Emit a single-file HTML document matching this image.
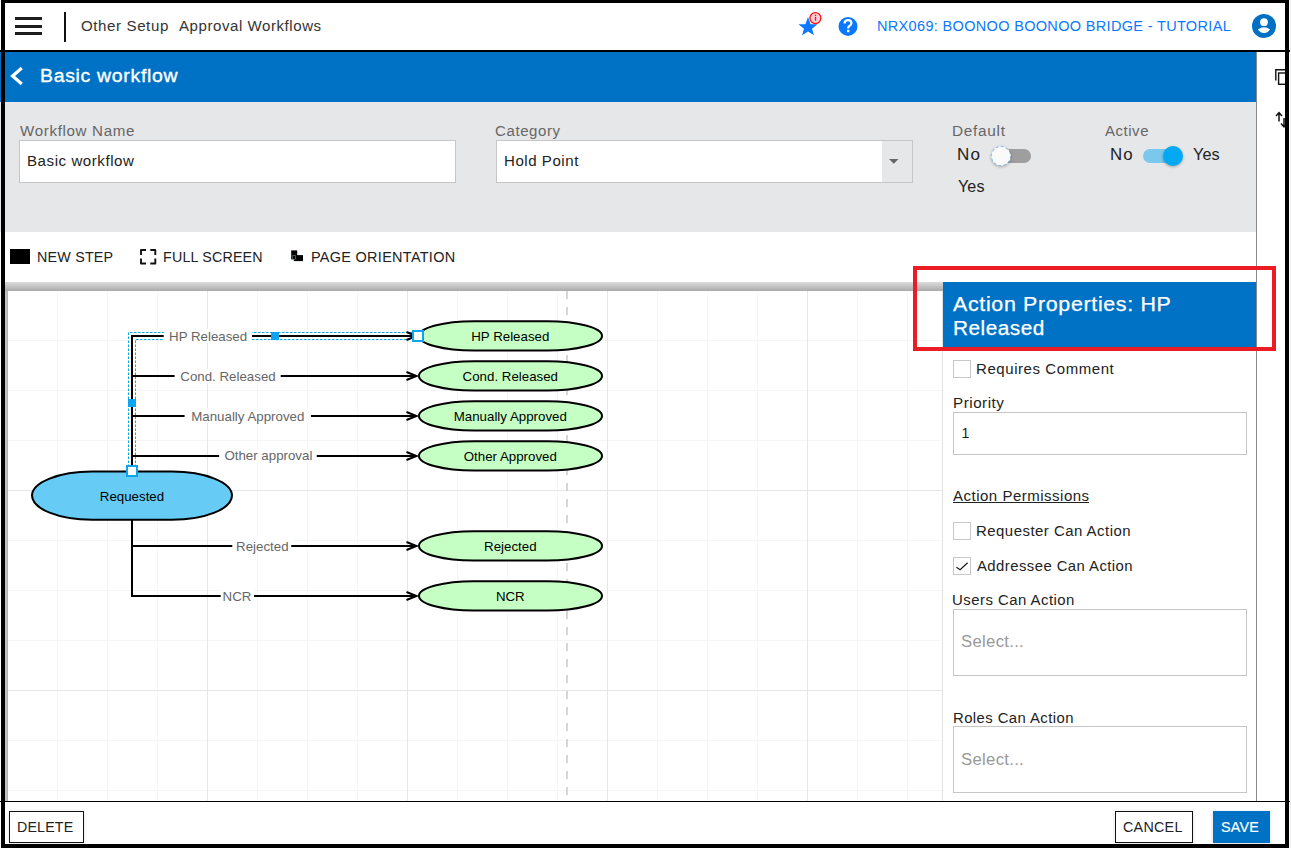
<!DOCTYPE html>
<html><head><meta charset="utf-8">
<style>
*{box-sizing:border-box;margin:0;padding:0}
html,body{width:1291px;height:848px;overflow:hidden;background:#fff;font-family:"Liberation Sans",sans-serif}
.a{position:absolute}
.tx{position:absolute;white-space:nowrap;font-family:"Liberation Sans",sans-serif}
.box{position:absolute;background:#fff;border:1px solid #c6c6c6}
.cb{position:absolute;width:18px;height:18px;background:#fff;border:1px solid #c8c8c8}
</style></head><body>
<!-- header -->
<div class="a" style="left:0;top:0;width:1291px;height:50px;background:#fff"></div>
<div class="a" style="left:15px;top:17px;width:27px;height:3px;background:#1e1e1e"></div>
<div class="a" style="left:15px;top:24.5px;width:27px;height:3px;background:#1e1e1e"></div>
<div class="a" style="left:15px;top:32px;width:27px;height:3px;background:#1e1e1e"></div>
<div class="a" style="left:64px;top:12px;width:2px;height:30px;background:#111"></div>
<svg class="a" style="left:790px;top:5px" width="40" height="40" viewBox="0 0 40 40">
  <polygon fill="#0a78ff" points="18,12 20.6,19.2 27.5,19.3 22,23.8 24,30.3 18,26.4 12,30.3 14,23.8 8.5,19.3 15.4,19.2"/>
  <circle cx="25.4" cy="13.1" r="5.5" fill="#ffd0d4" stroke="#ff1010" stroke-width="1.3"/>
  <rect x="24.8" y="11.8" width="1.4" height="4" fill="#f0106a"/>
  <rect x="24.8" y="9.7" width="1.4" height="1.3" fill="#f0106a"/>
</svg>
<svg class="a" style="left:830px;top:8px" width="36" height="36" viewBox="0 0 36 36">
  <circle cx="18" cy="18.4" r="9.5" fill="#0a78ff"/>
  <path d="M14.6 15.6 Q14.6 12.2 18 12.2 Q21.4 12.2 21.4 15.2 Q21.4 17 19.4 18 Q18.2 18.7 18.2 20.4" fill="none" stroke="#fff" stroke-width="2.2"/>
  <rect x="17" y="21.8" width="2.4" height="2.4" fill="#fff"/>
</svg>
<svg class="a" style="left:1250px;top:12px" width="28" height="28" viewBox="0 0 28 28">
  <circle cx="14" cy="14" r="12" fill="#0070c4"/>
  <circle cx="14" cy="10.2" r="3.9" fill="#fff"/>
  <path d="M7.9 17.6 Q14 12.8 20.1 17.6 Q17.6 21.1 14 21.1 Q10.4 21.1 7.9 17.6 Z" fill="#fff"/>
</svg>
<div class="a" style="left:0;top:50px;width:1290px;height:2px;background:#000"></div>
<!-- title bar -->
<div class="a" style="left:0;top:52px;width:1256px;height:50px;background:#0072c6"></div>
<svg class="a" style="left:5px;top:62px" width="24" height="28" viewBox="0 0 24 28">
  <polyline points="16.8,6 7.6,14 16.8,22" fill="none" stroke="#fff" stroke-width="3.2" stroke-linecap="butt"/>
</svg>
<!-- right strip -->
<div class="a" style="left:1256px;top:52px;width:1px;height:749px;background:#8a8a8a"></div>
<svg class="a" style="left:1260px;top:60px" width="28" height="80" viewBox="0 0 28 80">
  <path d="M15.8 20.5 V9.8 H26" fill="none" stroke="#111" stroke-width="1.4"/>
  <rect x="18.6" y="13" width="9" height="11.3" fill="none" stroke="#111" stroke-width="1.4"/>
  <path d="M19 61.5 V53 M16 56 L19 52.6 L22 56" fill="none" stroke="#111" stroke-width="1.5"/>
  <path d="M24 58 V66.5 M21 63.5 L24 66.9 L27 63.5" fill="none" stroke="#111" stroke-width="1.5"/>
</svg>
<!-- form -->
<div class="a" style="left:0;top:102px;width:1256px;height:130px;background:#e6e7e9"></div>
<div class="box" style="left:19px;top:140px;width:437px;height:43px"></div>
<div class="box" style="left:496px;top:140px;width:417px;height:43px"></div>
<div class="a" style="left:882px;top:141px;width:30px;height:41px;background:#e6e7e9"></div>
<svg class="a" style="left:886px;top:156px" width="16" height="10" viewBox="0 0 16 10"><polygon points="3,3 12.5,3 7.75,7.8" fill="#666"/></svg>
<!-- default toggle -->
<div class="a" style="left:992px;top:149px;width:39px;height:14px;border-radius:7px;background:#9e9e9e"></div>
<div class="a" style="left:991px;top:145.8px;width:20px;height:20px;border-radius:50%;background:#fafafa;border:1px dashed #8fbcf2;box-shadow:0 1px 3px rgba(0,0,0,0.3)"></div>
<!-- active toggle -->
<div class="a" style="left:1143px;top:149px;width:36px;height:14px;border-radius:7px;background:#7ac8ee"></div>
<div class="a" style="left:1163px;top:145.8px;width:20px;height:20px;border-radius:50%;background:#03a9f4;box-shadow:0 1px 3px rgba(0,0,0,0.3)"></div>
<!-- toolbar -->
<div class="a" style="left:10px;top:249px;width:20px;height:15px;background:#000"></div>
<svg class="a" style="left:136px;top:245px" width="24" height="24" viewBox="0 0 24 24">
  <path d="M5 10 V5 H10 M14.3 5 H19.3 V10 M19.3 13.6 V18.5 H14.3 M10 18.5 H5 V13.6" fill="none" stroke="#111" stroke-width="1.9" stroke-linejoin="round"/>
</svg>
<svg class="a" style="left:286px;top:245px" width="22" height="22" viewBox="0 0 22 22">
  <rect x="5.2" y="5.4" width="6" height="9" fill="#000"/>
  <rect x="7.8" y="10.1" width="9.2" height="6" fill="#000"/>
  <rect x="6.8" y="10.6" width="2.6" height="4" fill="none" stroke="#8aa" stroke-width="0.5"/>
</svg>
<!-- canvas -->
<div class="a" style="left:5px;top:282px;width:938px;height:9px;background:linear-gradient(#dcdcdc,#a9a9a9)"></div>
<div class="a" style="left:5px;top:291px;width:3px;height:510px;background:linear-gradient(90deg,#c8c8c8,#b0b0b0)"></div>
<div class="a" style="left:942px;top:291px;width:1px;height:510px;background:#e2e2e2"></div>
<svg class="a" style="left:8px;top:291px" width="934" height="510" viewBox="8 291 934 510">
  <defs>
    <pattern id="gmin" x="7" y="290" width="50" height="50" patternUnits="userSpaceOnUse">
      <path d="M0.5 0 V50 M0 0.5 H50" stroke="#f6f6f6" stroke-width="1" fill="none"/>
    </pattern>
    <pattern id="gmaj" x="7" y="290" width="200" height="200" patternUnits="userSpaceOnUse">
      <path d="M0.5 0 V200 M0 0.5 H200" stroke="#e6e6e6" stroke-width="1" fill="none"/>
    </pattern>
  </defs>
  <rect x="8" y="291" width="934" height="510" fill="#fff"/>
  <rect x="8" y="291" width="934" height="510" fill="url(#gmin)"/>
  <rect x="8" y="291" width="934" height="510" fill="url(#gmaj)"/>
  <line x1="567" y1="291" x2="567" y2="801" stroke="#d6d6d6" stroke-width="2" stroke-dasharray="8 8"/>
  <path d="M128.5 471 V332.5 H416" fill="none" stroke="#0ca5ee" stroke-width="1" stroke-dasharray="2.5 1.5"/>
  <path d="M135.5 471 V339.5 H416" fill="none" stroke="#0ca5ee" stroke-width="1" stroke-dasharray="2.5 1.5"/>
  <path d="M132 471 V335 M132 520 V597" stroke="#000" stroke-width="2" fill="none"/>
  <path d="M131 336 H416" stroke="#000" stroke-width="2" fill="none"/>
  <path d="M406.5 332 L416.5 336 L406.5 340" stroke="#000" stroke-width="2" fill="none" stroke-linejoin="miter"/>
  <path d="M131 376 H416" stroke="#000" stroke-width="2" fill="none"/>
  <path d="M406.5 372 L416.5 376 L406.5 380" stroke="#000" stroke-width="2" fill="none" stroke-linejoin="miter"/>
  <path d="M131 416 H416" stroke="#000" stroke-width="2" fill="none"/>
  <path d="M406.5 412 L416.5 416 L406.5 420" stroke="#000" stroke-width="2" fill="none" stroke-linejoin="miter"/>
  <path d="M131 456 H416" stroke="#000" stroke-width="2" fill="none"/>
  <path d="M406.5 452 L416.5 456 L406.5 460" stroke="#000" stroke-width="2" fill="none" stroke-linejoin="miter"/>
  <path d="M131 546 H416" stroke="#000" stroke-width="2" fill="none"/>
  <path d="M406.5 542 L416.5 546 L406.5 550" stroke="#000" stroke-width="2" fill="none" stroke-linejoin="miter"/>
  <path d="M131 596 H416" stroke="#000" stroke-width="2" fill="none"/>
  <path d="M406.5 592 L416.5 596 L406.5 600" stroke="#000" stroke-width="2" fill="none" stroke-linejoin="miter"/>
  <rect x="163.7" y="329" width="88.3" height="14" fill="#fff"/>
  <text x="208.1" y="340.8" text-anchor="middle" font-family="Liberation Sans" font-size="13.3" fill="#666">HP Released</text>
  <rect x="174.6" y="369" width="106.1" height="14" fill="#fff"/>
  <text x="228" y="380.8" text-anchor="middle" font-family="Liberation Sans" font-size="13.3" fill="#666">Cond. Released</text>
  <rect x="184.6" y="409" width="126.3" height="14" fill="#fff"/>
  <text x="247.8" y="420.8" text-anchor="middle" font-family="Liberation Sans" font-size="13.3" fill="#666">Manually Approved</text>
  <rect x="219.1" y="449" width="97.6" height="14" fill="#fff"/>
  <text x="268.4" y="460.4" text-anchor="middle" font-family="Liberation Sans" font-size="13.3" fill="#666">Other approval</text>
  <rect x="232.3" y="539" width="58.9" height="14" fill="#fff"/>
  <text x="262.3" y="550.9" text-anchor="middle" font-family="Liberation Sans" font-size="13.3" fill="#666">Rejected</text>
  <rect x="220.7" y="589" width="33.3" height="14" fill="#fff"/>
  <text x="237" y="600.5" text-anchor="middle" font-family="Liberation Sans" font-size="13.3" fill="#666">NCR</text>
  <path d="M92.00 471.5 H172.00 A60.00 24.10 0 0 1 172.00 519.7 H92.00 A60.00 24.10 0 0 1 92.00 471.5 Z" fill="#66ccf5" stroke="#000" stroke-width="2"/>
  <text x="132" y="500.8" text-anchor="middle" font-family="Liberation Sans" font-size="13.3" fill="#000">Requested</text>
  <path d="M473.90 321.29999999999995 H547.10 A54.90 14.60 0 0 1 547.10 350.5 H473.90 A54.90 14.60 0 0 1 473.90 321.29999999999995 Z" fill="#c6ffc4" stroke="#000" stroke-width="2"/>
  <text x="510.3" y="340.8" text-anchor="middle" font-family="Liberation Sans" font-size="13.3" fill="#000">HP Released</text>
  <path d="M473.90 361.29999999999995 H547.10 A54.90 14.60 0 0 1 547.10 390.5 H473.90 A54.90 14.60 0 0 1 473.90 361.29999999999995 Z" fill="#c6ffc4" stroke="#000" stroke-width="2"/>
  <text x="510.3" y="380.8" text-anchor="middle" font-family="Liberation Sans" font-size="13.3" fill="#000">Cond. Released</text>
  <path d="M473.90 401.29999999999995 H547.10 A54.90 14.60 0 0 1 547.10 430.5 H473.90 A54.90 14.60 0 0 1 473.90 401.29999999999995 Z" fill="#c6ffc4" stroke="#000" stroke-width="2"/>
  <text x="510.3" y="420.8" text-anchor="middle" font-family="Liberation Sans" font-size="13.3" fill="#000">Manually Approved</text>
  <path d="M473.90 441.29999999999995 H547.10 A54.90 14.60 0 0 1 547.10 470.5 H473.90 A54.90 14.60 0 0 1 473.90 441.29999999999995 Z" fill="#c6ffc4" stroke="#000" stroke-width="2"/>
  <text x="510.3" y="460.8" text-anchor="middle" font-family="Liberation Sans" font-size="13.3" fill="#000">Other Approved</text>
  <path d="M473.90 531.3 H547.10 A54.90 14.60 0 0 1 547.10 560.5 H473.90 A54.90 14.60 0 0 1 473.90 531.3 Z" fill="#c6ffc4" stroke="#000" stroke-width="2"/>
  <text x="510.3" y="550.8" text-anchor="middle" font-family="Liberation Sans" font-size="13.3" fill="#000">Rejected</text>
  <path d="M473.90 581.3 H547.10 A54.90 14.60 0 0 1 547.10 610.5 H473.90 A54.90 14.60 0 0 1 473.90 581.3 Z" fill="#c6ffc4" stroke="#000" stroke-width="2"/>
  <text x="510.3" y="600.8" text-anchor="middle" font-family="Liberation Sans" font-size="13.3" fill="#000">NCR</text>
  <rect x="128" y="399" width="8" height="8" fill="#0ca5ee"/>
  <rect x="271" y="332" width="8" height="8" fill="#0ca5ee"/>
  <rect x="127" y="466" width="10" height="10" fill="#fff" stroke="#0ca5ee" stroke-width="2"/>
  <rect x="413" y="331" width="10" height="10" fill="#fff" stroke="#0ca5ee" stroke-width="2"/>
</svg>
<!-- panel -->
<div class="a" style="left:943px;top:282px;width:313px;height:65px;background:#0072c6"></div>
<div class="cb" style="left:953px;top:360px"></div>
<div class="box" style="left:953px;top:412px;width:294px;height:43px"></div>
<div class="a" style="left:953px;top:502px;width:136px;height:1px;background:#222"></div>
<div class="cb" style="left:953px;top:522px"></div>
<div class="cb" style="left:953px;top:557px"></div>
<svg class="a" style="left:953px;top:557px" width="18" height="18" viewBox="0 0 18 18"><polyline points="3.4,10.2 7.1,12.7 14.6,5.7" fill="none" stroke="#1a1a1a" stroke-width="1.2"/></svg>
<div class="box" style="left:953px;top:609px;width:294px;height:67px"></div>
<div class="box" style="left:953px;top:726px;width:294px;height:67px"></div>
<!-- red annotation -->
<div class="a" style="left:913px;top:266px;width:363px;height:85px;border:4px solid #ec1c24"></div>
<!-- footer -->
<div class="a" style="left:0;top:801px;width:1291px;height:1px;background:#000"></div>
<div class="a" style="left:9px;top:811px;width:75px;height:32px;border:1px solid #111;background:#fff;box-shadow:0 1px 4px rgba(0,0,0,0.12)"></div>
<div class="a" style="left:1115px;top:811px;width:78px;height:32px;border:1px solid #111;background:#fff;box-shadow:0 1px 4px rgba(0,0,0,0.12)"></div>
<div class="a" style="left:1213px;top:811px;width:57px;height:32px;background:#0072c6;box-shadow:0 1px 4px rgba(0,0,0,0.15)"></div>
<div class='tx' style='left:80.5px;top:19.3px;font-size:14px;line-height:14px;color:#333;font-weight:400;letter-spacing:0.54px;transform:scaleX(1.0791);transform-origin:0 0;'>Other Setup</div>
<div class='tx' style='left:178.8px;top:19.3px;font-size:14px;line-height:14px;color:#333;font-weight:400;letter-spacing:0.51px;transform:scaleX(1.0756);transform-origin:0 0;'>Approval Workflows</div>
<div class='tx' style='left:877.0px;top:19.0px;font-size:14px;line-height:14px;color:#0a78ff;font-weight:400;letter-spacing:0.31px;transform:scaleX(1.0370);transform-origin:0 0;'>NRX069: BOONOO BOONOO BRIDGE - TUTORIAL</div>
<div class='tx' style='left:39.9px;top:66.6px;font-size:18px;line-height:18px;color:#fff;font-weight:400;letter-spacing:0.66px;transform:scaleX(1.0780);transform-origin:0 0;-webkit-text-stroke:0.35px #fff'>Basic workflow</div>
<div class='tx' style='left:19.8px;top:123.7px;font-size:14px;line-height:14px;color:#666;font-weight:400;letter-spacing:0.61px;transform:scaleX(1.0806);transform-origin:0 0;'>Workflow Name</div>
<div class='tx' style='left:26.8px;top:153.8px;font-size:14px;line-height:14px;color:#222;font-weight:400;letter-spacing:0.51px;transform:scaleX(1.0777);transform-origin:0 0;'>Basic workflow</div>
<div class='tx' style='left:495.0px;top:124.0px;font-size:14px;line-height:14px;color:#666;font-weight:400;letter-spacing:0.55px;transform:scaleX(1.0732);transform-origin:0 0;'>Category</div>
<div class='tx' style='left:503.8px;top:153.8px;font-size:14px;line-height:14px;color:#222;font-weight:400;letter-spacing:0.50px;transform:scaleX(1.0758);transform-origin:0 0;'>Hold Point</div>
<div class='tx' style='left:952.2px;top:123.7px;font-size:14px;line-height:14px;color:#666;font-weight:400;letter-spacing:0.64px;transform:scaleX(1.0977);transform-origin:0 0;'>Default</div>
<div class='tx' style='left:957.4px;top:147.0px;font-size:16px;line-height:16px;color:#222;font-weight:400;letter-spacing:1.17px;transform:scaleX(1.0658);transform-origin:0 0;'>No</div>
<div class='tx' style='left:958.0px;top:179.1px;font-size:16px;line-height:16px;color:#222;font-weight:400;letter-spacing:0.10px;transform:scaleX(1.0077);transform-origin:0 0;'>Yes</div>
<div class='tx' style='left:1105.0px;top:123.7px;font-size:14px;line-height:14px;color:#666;font-weight:400;letter-spacing:0.50px;transform:scaleX(1.0697);transform-origin:0 0;'>Active</div>
<div class='tx' style='left:1109.9px;top:147.0px;font-size:16px;line-height:16px;color:#222;font-weight:400;letter-spacing:0.95px;transform:scaleX(1.0526);transform-origin:0 0;'>No</div>
<div class='tx' style='left:1193.2px;top:147.0px;font-size:16px;line-height:16px;color:#222;font-weight:400;letter-spacing:0.15px;transform:scaleX(1.0115);transform-origin:0 0;'>Yes</div>
<div class='tx' style='left:36.8px;top:250.4px;font-size:14px;line-height:14px;color:#222;font-weight:400;letter-spacing:0.21px;transform:scaleX(1.0208);transform-origin:0 0;'>NEW STEP</div>
<div class='tx' style='left:162.5px;top:250.3px;font-size:14px;line-height:14px;color:#222;font-weight:400;letter-spacing:0.18px;transform:scaleX(1.0191);transform-origin:0 0;'>FULL SCREEN</div>
<div class='tx' style='left:311.2px;top:250.3px;font-size:14px;line-height:14px;color:#222;font-weight:400;letter-spacing:0.28px;transform:scaleX(1.0331);transform-origin:0 0;'>PAGE ORIENTATION</div>
<div class='tx' style='left:953.4px;top:294.1px;font-size:20px;line-height:20px;color:#fff;font-weight:400;letter-spacing:0.62px;transform:scaleX(1.0700);transform-origin:0 0;-webkit-text-stroke:0.25px #fff'>Action Properties: HP</div>
<div class='tx' style='left:952.7px;top:318.3px;font-size:20px;line-height:20px;color:#fff;font-weight:400;letter-spacing:0.47px;transform:scaleX(1.0410);transform-origin:0 0;-webkit-text-stroke:0.25px #fff'>Released</div>
<div class='tx' style='left:975.7px;top:361.9px;font-size:14px;line-height:14px;color:#222;font-weight:400;letter-spacing:0.53px;transform:scaleX(1.0717);transform-origin:0 0;'>Requires Comment</div>
<div class='tx' style='left:952.9px;top:396.1px;font-size:14px;line-height:14px;color:#222;font-weight:400;letter-spacing:0.48px;transform:scaleX(1.0849);transform-origin:0 0;'>Priority</div>
<div class='tx' style='left:961.4px;top:426.1px;font-size:14px;line-height:14px;color:#222;font-weight:400;letter-spacing:0.00px;'>1</div>
<div class='tx' style='left:953.0px;top:489.0px;font-size:14px;line-height:14px;color:#222;font-weight:400;letter-spacing:0.47px;transform:scaleX(1.0714);transform-origin:0 0;'>Action Permissions</div>
<div class='tx' style='left:975.7px;top:523.9px;font-size:14px;line-height:14px;color:#222;font-weight:400;letter-spacing:0.45px;transform:scaleX(1.0678);transform-origin:0 0;'>Requester Can Action</div>
<div class='tx' style='left:976.6px;top:558.7px;font-size:14px;line-height:14px;color:#222;font-weight:400;letter-spacing:0.42px;transform:scaleX(1.0620);transform-origin:0 0;'>Addressee Can Action</div>
<div class='tx' style='left:952.4px;top:592.8px;font-size:14px;line-height:14px;color:#222;font-weight:400;letter-spacing:0.44px;transform:scaleX(1.0665);transform-origin:0 0;'>Users Can Action</div>
<div class='tx' style='left:960.6px;top:633.8px;font-size:16px;line-height:16px;color:#999;font-weight:400;letter-spacing:0.29px;transform:scaleX(1.0436);transform-origin:0 0;'>Select...</div>
<div class='tx' style='left:952.9px;top:710.9px;font-size:14px;line-height:14px;color:#222;font-weight:400;letter-spacing:0.41px;transform:scaleX(1.0608);transform-origin:0 0;'>Roles Can Action</div>
<div class='tx' style='left:960.6px;top:751.7px;font-size:16px;line-height:16px;color:#999;font-weight:400;letter-spacing:0.29px;transform:scaleX(1.0436);transform-origin:0 0;'>Select...</div>
<div class='tx' style='left:16.8px;top:820.3px;font-size:14px;line-height:14px;color:#222;font-weight:400;letter-spacing:0.17px;transform:scaleX(1.0160);transform-origin:0 0;'>DELETE</div>
<div class='tx' style='left:1122.5px;top:820.3px;font-size:14px;line-height:14px;color:#222;font-weight:400;letter-spacing:0.25px;transform:scaleX(1.0232);transform-origin:0 0;'>CANCEL</div>
<div class='tx' style='left:1220.9px;top:820.3px;font-size:14px;line-height:14px;color:#fff;font-weight:400;letter-spacing:0.23px;transform:scaleX(1.0200);transform-origin:0 0;-webkit-text-stroke:0.2px #fff'>SAVE</div>
<!-- screenshot border -->
<div class="a" style="left:1px;top:0;width:1288px;height:3px;background:#000"></div>
<div class="a" style="left:1px;top:0;width:4px;height:848px;background:#000"></div>
<div class="a" style="left:1285px;top:0;width:4px;height:848px;background:#000"></div>
<div class="a" style="left:1px;top:844px;width:1288px;height:4px;background:#000"></div>
<div class="a" style="left:1290px;top:0;width:1px;height:848px;background:#eee"></div>
</body></html>
